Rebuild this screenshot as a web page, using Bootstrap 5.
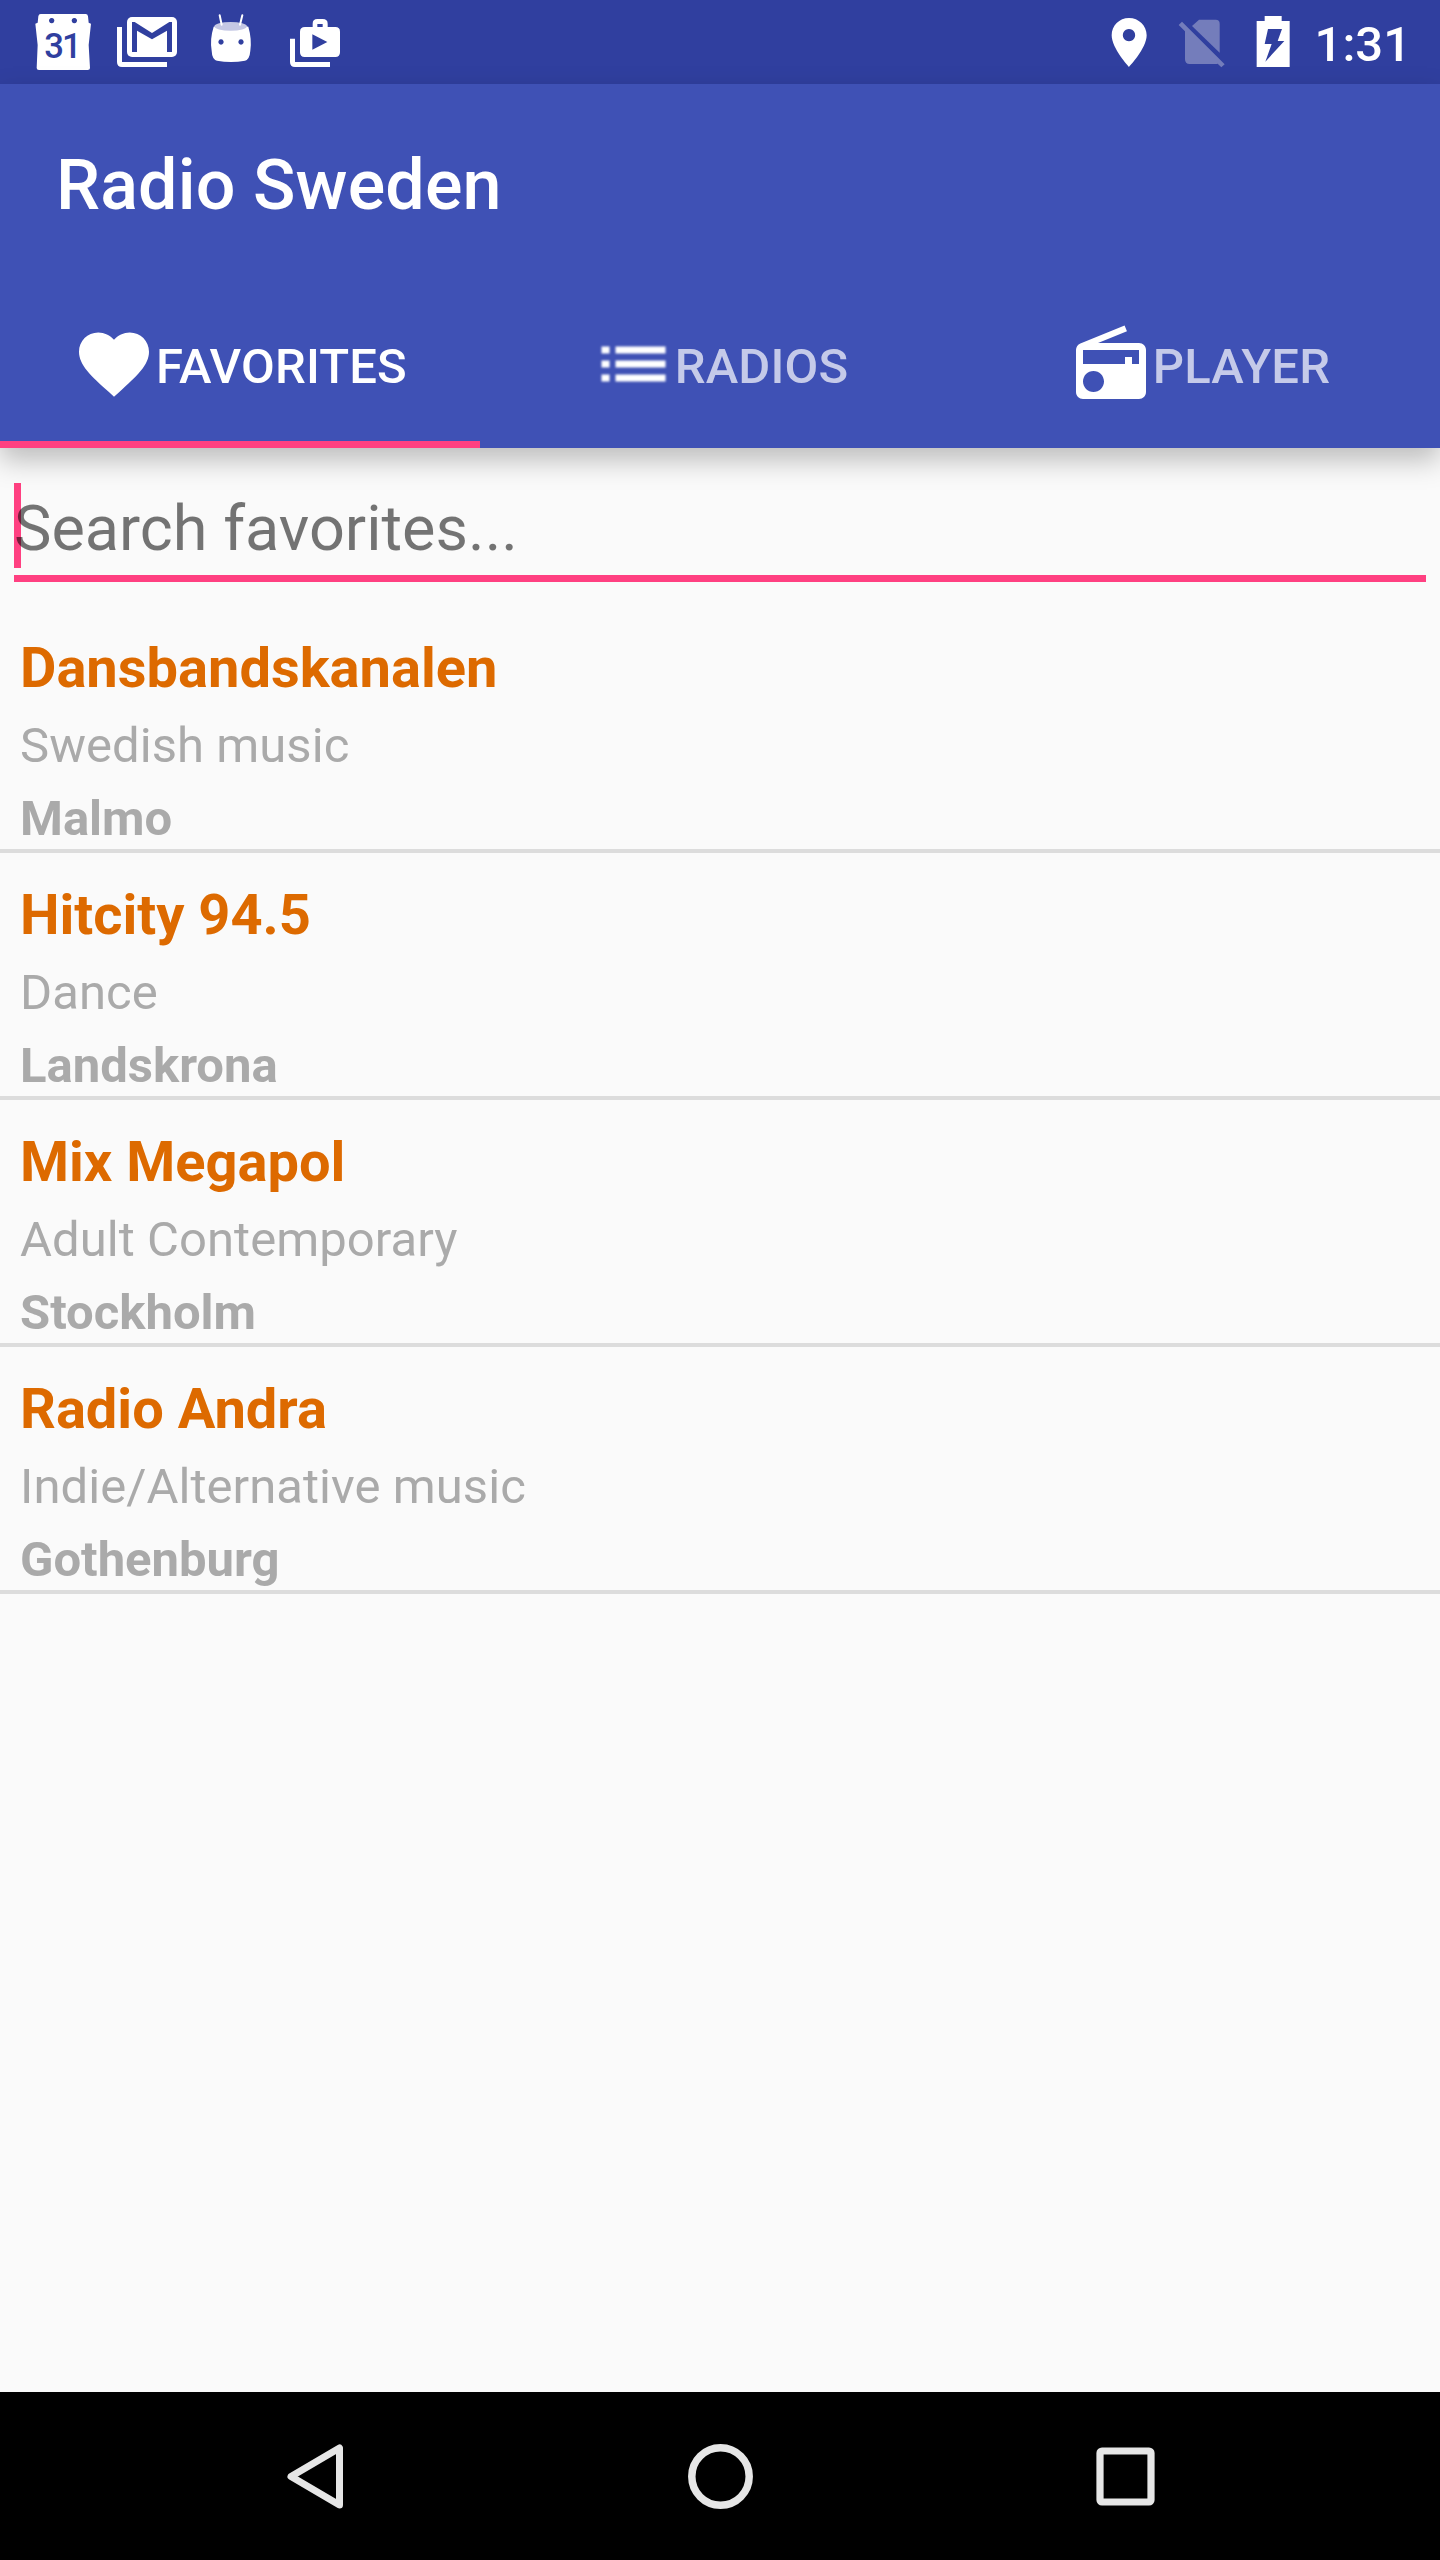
<!DOCTYPE html>
<html lang="en">
<head>
<meta charset="utf-8">
<meta name="viewport" content="width=device-width, initial-scale=1">
<title>Radio Sweden</title>
<link href="https://cdn.jsdelivr.net/npm/bootstrap@5.3.0/dist/css/bootstrap.min.css" rel="stylesheet">
<style>
  body { font-family: Roboto, "Liberation Sans", sans-serif; background: #fafafa; height: 2560px; overflow: hidden; }
  svg { display: block; flex: none; }
  .status-bar { height: 84px; background: #303f9f; padding-left: 33px; padding-right: 29px; }
  .notif-icons { gap: 24px; }
  .clock { font-size: 49px; font-weight: 500; line-height: 59px; padding-top: 4px; margin-left: 11px; }
  .app-header { background: #3f51b5; box-shadow: 0 12px 26px rgba(0,0,0,.25); z-index: 2; }
  .app-title { height: 196px; padding: 6px 56px 0; font-size: 70px; font-weight: 500; letter-spacing: .15px; }
  .tab-strip { height: 168px; }
  .tab-strip .nav-link { color: #c5cae9; font-size: 49px; font-weight: 500; line-height: 59px; border-radius: 0; }
  .tab-strip .nav-link.active { color: #fff; background: none; box-shadow: inset 0 -7px #ff4081; }
  .tab-strip .tab-label { padding-top: 5px; letter-spacing: .15px; }
  .tab-strip svg { margin-left: -1px; }
  .soft-icon { filter: blur(.8px); }
  .search-wrap { padding: 35px 14px 24px; }
  .search-field { height: 99px; line-height: 91px; font-size: 63px; border-bottom: 7px solid #ff4081; }
  .search-hint { color: rgba(0,0,0,.54); }
  .caret { width: 7px; height: 85px; background: #ff4081; left: 0; top: 0; }
  .station { height: 247px; padding: 29px 20px 0; border-bottom: 4px solid #dcdcdc; color: #aaa; font-size: 49px; }
  .station-name { color: #dd6a00; font-size: 56px; line-height: 66px; }
  .station-genre { line-height: 90px; letter-spacing: .05px; }
  .station-city { line-height: 55px; }
  .nav-keys { height: 168px; gap: 321px; padding-left: 2px; }
</style>
</head>
<body class="d-flex flex-column">
  <div class="status-bar d-flex align-items-center justify-content-between text-white">
    <div class="notif-icons d-flex">
      <svg width="60" height="60" viewBox="99 36 180 180">
        <path fill="#fff" fill-rule="evenodd" d="M122 42H257Q263 42 264 49L266 68L273 71L266 135L270 204Q270 210 263 210H117Q110 210 110 204L113 135L106 71L113 68L115 49Q116 42 122 42ZM155 54a8 8 0 1 0 .1 0ZM223 54a8 8 0 1 0 .1 0Z"/>
        <text x="186" y="175" text-anchor="middle" font-family="Roboto" font-weight="500" font-size="104" letter-spacing="-6" fill="#303f9f">31</text>
      </svg>
      <svg width="60" height="60" viewBox="351 36 180 180">
        <path fill="#fff" d="M351 81H366V186H501V201H366Q351 201 351 186Z"/>
        <rect x="381" y="51" width="150" height="120" rx="15" fill="#fff"/>
        <path fill="#303f9f" d="M396 66H404L456 99L508 66H516V156H501V92L456 118L411 92V156H396Z"/>
      </svg>
      <svg width="60" height="60" viewBox="603 36 180 180">
        <path fill="#fff" fill-rule="evenodd" d="M641 80Q693 66 745 80Q756 118 751 152Q749 178 735 182Q693 190 651 182Q636 178 635 152Q629 118 641 80ZM663 118a8 8 0 1 0 .1 0ZM723 118a8 8 0 1 0 .1 0Z"/>
        <ellipse cx="692" cy="79" rx="49" ry="13" fill="#c5c8e4"/>
        <path d="M659 46L665 74M727 46L720 74" stroke="#fff" stroke-width="6" stroke-linecap="round"/>
      </svg>
      <svg width="60" height="60" viewBox="855 36 180 180">
        <path fill="#fff" d="M870 116H885V186H990V201H885Q870 201 870 186Z"/>
        <path fill="#fff" fill-rule="evenodd" d="M915 81H938V71Q938 57 952 57H968Q983 57 983 71V81H1006Q1020 81 1020 95V157Q1020 171 1006 171H914Q900 171 900 157V95Q900 81 915 81ZM952 72V81H968V72ZM937 103V149L982 126Z"/>
      </svg>
    </div>
    <div class="d-flex align-items-center">
      <svg width="60" height="60" viewBox="58 36 180 180">
        <path fill="#fff" fill-rule="evenodd" d="M148 54C119 54 96 77 96 106C96 145 148 201 148 201C148 201 201 145 201 106C201 77 177 54 148 54ZM148 87a18.500 18.500 0 1 1 -.1 0Z"/>
      </svg>
      <svg width="85" height="60" viewBox="238 36 255 180" fill="#747dbb">
        <path d="M358 59H408Q420 59 420 71V158L337 78Z"/>
        <path d="M307 65L435 193L425 202L414 191Q411 192 408 192H330Q316 192 316 178V94L297 75Z"/>
      </svg>
      <svg width="60" height="60" viewBox="493 36 180 180">
        <path fill="#fff" fill-rule="evenodd" d="M555 48H606V63H630V201H531V63H555ZM565 87L555 132H576L557 185L614 123H594L607 87Z"/>
      </svg>
      <span class="clock">1:31</span>
    </div>
  </div>

  <header class="app-header position-relative text-white">
    <div class="app-title d-flex align-items-center">Radio Sweden</div>
    <nav class="tab-strip nav nav-fill row g-0">
      <a class="nav-link active col-4 p-0 d-flex align-items-center justify-content-center" href="#">
        <svg width="84" height="84" viewBox="0 0 24 24" fill="#fff"><path d="M12 21.350l-1.450-1.320C5.400 15.360 2 12.280 2 8.500 2 5.420 4.420 3 7.500 3c1.740 0 3.410.810 4.500 2.090C13.090 3.810 14.760 3 16.500 3 19.580 3 22 5.420 22 8.500c0 3.780-3.400 6.860-8.550 11.540L12 21.350z"/></svg>
        <span class="tab-label">FAVORITES</span>
      </a>
      <a class="nav-link col-4 p-0 d-flex align-items-center justify-content-center" href="#">
        <svg class="soft-icon" width="84" height="84" viewBox="0 0 24 24" fill="#fff"><path d="M3 13h2.300v-2H3v2zm0 4h2.300v-2H3v2zm0-8h2.300V7H3v2zm4 4h14.300v-2H7v2zm0 4h14.300v-2H7v2zM7 7v2h14.300V7H7z"/></svg>
        <span class="tab-label">RADIOS</span>
      </a>
      <a class="nav-link col-4 p-0 d-flex align-items-center justify-content-center" href="#">
        <svg width="84" height="84" viewBox="0 0 24 24" fill="#fff"><path d="M3.240 6.150C2.510 6.430 2 7.170 2 8v12c0 1.100.890 2 2 2h16c1.110 0 2-.9 2-2V8c0-1.110-.890-2-2-2H8.300l8.260-3.340L15.880 1 3.240 6.150zM7 20c-1.660 0-3-1.340-3-3s1.340-3 3-3 3 1.340 3 3-1.340 3-3 3zm13-8h-2v-2h-2v2H4V8h16v4z"/></svg>
        <span class="tab-label">PLAYER</span>
      </a>
    </nav>
  </header>

  <main class="flex-grow-1">
    <div class="search-wrap">
      <div class="search-field position-relative">
        <div class="caret position-absolute"></div>
        <span class="search-hint position-relative">Search favorites...</span>
      </div>
    </div>
    <div class="station-list">
      <div class="station">
        <div class="station-name fw-bold">Dansbandskanalen</div>
        <div class="station-genre">Swedish music</div>
        <div class="station-city fw-bold">Malmo</div>
      </div>
      <div class="station">
        <div class="station-name fw-bold">Hitcity 94.5</div>
        <div class="station-genre">Dance</div>
        <div class="station-city fw-bold">Landskrona</div>
      </div>
      <div class="station">
        <div class="station-name fw-bold">Mix Megapol</div>
        <div class="station-genre">Adult Contemporary</div>
        <div class="station-city fw-bold">Stockholm</div>
      </div>
      <div class="station">
        <div class="station-name fw-bold">Radio Andra</div>
        <div class="station-genre">Indie/Alternative music</div>
        <div class="station-city fw-bold">Gothenburg</div>
      </div>
    </div>
  </main>

  <footer class="nav-keys bg-black d-flex align-items-center justify-content-center">
    <svg width="84" height="84" viewBox="0 0 84 84" fill="none" stroke="#e6e6e6" stroke-width="7" stroke-linejoin="round"><path d="M65.500 14V71L17 42.500Z"/></svg>
    <svg width="84" height="84" viewBox="0 0 84 84" fill="none" stroke="#e6e6e6" stroke-width="7.500"><circle cx="41.500" cy="42.500" r="28.700"/></svg>
    <svg width="84" height="84" viewBox="0 0 84 84" fill="none" stroke="#e6e6e6" stroke-width="7.200"><rect x="16" y="17" width="51" height="51" rx="2"/></svg>
  </footer>
<script src="https://cdn.jsdelivr.net/npm/bootstrap@5.3.0/dist/js/bootstrap.bundle.min.js"></script>
</body>
</html>
